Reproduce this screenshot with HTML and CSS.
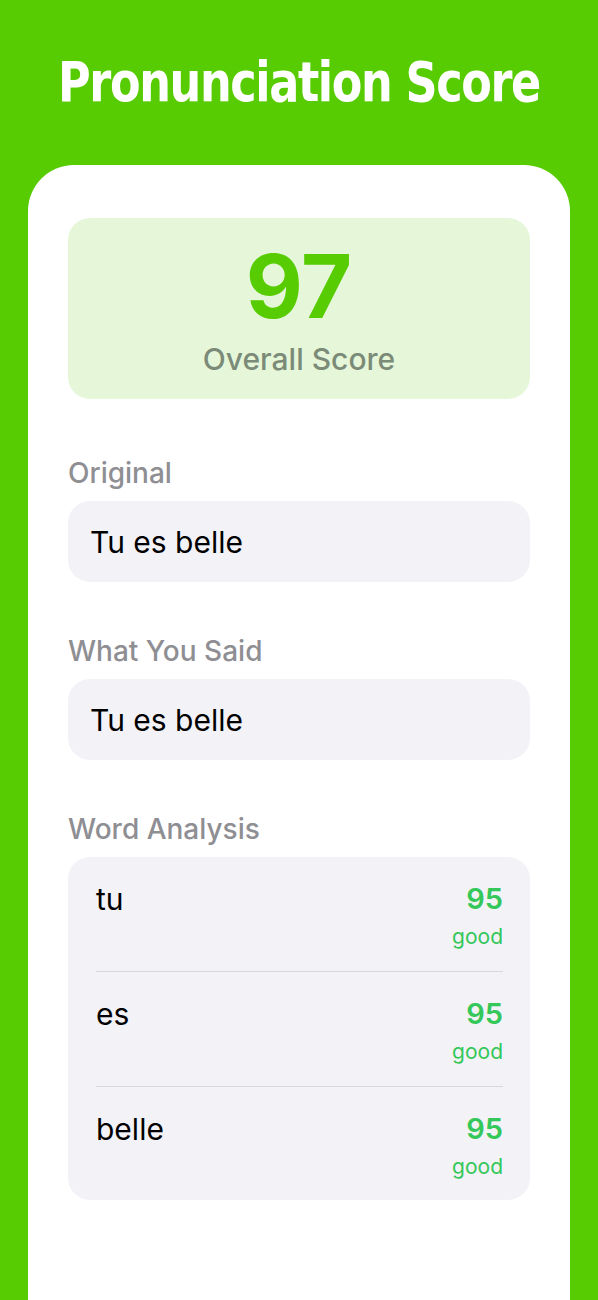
FILE: index.html
```html
<!DOCTYPE html>
<html lang="en">
<head>
<meta charset="utf-8">
<title>Pronunciation Score</title>
<link rel="stylesheet" href="styles.css">
</head>
<body>
<div class="screen">
  <h1 class="title">Pronunciation Score</h1>
  <main class="card">
    <div class="score-box">
      <div class="score-value">97</div>
      <div class="score-label">Overall Score</div>
    </div>

    <section class="field field-first">
      <div class="field-label">Original</div>
      <div class="field-box">Tu es belle</div>
    </section>

    <section class="field">
      <div class="field-label">What You Said</div>
      <div class="field-box">Tu es belle</div>
    </section>

    <section class="field">
      <div class="field-label">Word Analysis</div>
      <div class="words">
        <div class="word-row">
          <div class="word">tu</div>
          <div class="word-score"><span class="num">95</span><span class="grade">good</span></div>
        </div>
        <div class="word-row">
          <div class="word">es</div>
          <div class="word-score"><span class="num">95</span><span class="grade">good</span></div>
        </div>
        <div class="word-row">
          <div class="word">belle</div>
          <div class="word-score"><span class="num">95</span><span class="grade">good</span></div>
        </div>
      </div>
    </section>
  </main>
</div>
</body>
</html>
```

FILE: styles.css
```css
* { box-sizing: border-box; }
html, body { margin: 0; padding: 0; }
body {
  background: #58cc02;
  font-family: Inter, "Noto Sans", "Liberation Sans", sans-serif;
  height: 1300px;
  overflow: hidden;
}
.screen {
  display: flex;
  flex-direction: column;
  height: 1300px;
}
.title {
  margin: 0;
  padding-top: 47px;
  height: 165px;
  text-align: center;
  color: #fff;
  font-family: "DejaVu Sans Condensed", "DejaVu Sans", sans-serif;
  font-stretch: condensed;
  font-weight: 700;
  font-size: 55px;
  line-height: 70px;
  letter-spacing: -1.5px;
  transform: scaleX(0.9);
}
.card {
  flex: 1;
  margin: 0 28px;
  background: #fff;
  border-radius: 46px 46px 0 0;
  padding: 53px 40px 0;
  display: flex;
  flex-direction: column;
}
.score-box {
  background: #e6f7d9;
  border-radius: 22px;
  height: 181px;
  display: flex;
  flex-direction: column;
  align-items: center;
  padding-top: 23px;
}
.score-value {
  color: #58cc02;
  font-weight: 700;
  font-size: 88px;
  line-height: 90px;
}
.score-label {
  color: #7b8b78;
  font-weight: 500;
  font-size: 30px;
  line-height: 36px;
  margin-top: 10px;
}
.field { margin-top: 53px; }
.field-first { margin-top: 58px; }
.field-label {
  color: #8e8e93;
  font-weight: 500;
  font-size: 28px;
  line-height: 32px;
  margin-bottom: 12px;
}
.field-box {
  background: #f2f2f7;
  border-radius: 22px;
  height: 81px;
  padding: 0 22px;
  display: flex;
  align-items: center;
  font-size: 30px;
  color: #000;
}
.words {
  background: #f2f2f7;
  border-radius: 22px;
  padding: 0 27px 0 28px;
}
.word-row {
  display: flex;
  justify-content: space-between;
  align-items: flex-start;
  padding: 26px 0 21px;
  border-bottom: 1px solid #d8d8dc;
}
.word-row:last-child { border-bottom: none; padding-bottom: 20px; }
.word {
  font-size: 30px;
  line-height: 32px;
  color: #000;
}
.word-score {
  display: flex;
  flex-direction: column;
  align-items: flex-end;
}
.num {
  color: #34c759;
  font-weight: 600;
  font-size: 29px;
  line-height: 32px;
}
.grade {
  color: #34c759;
  font-size: 21px;
  line-height: 26px;
  margin-top: 9px;
}
```
